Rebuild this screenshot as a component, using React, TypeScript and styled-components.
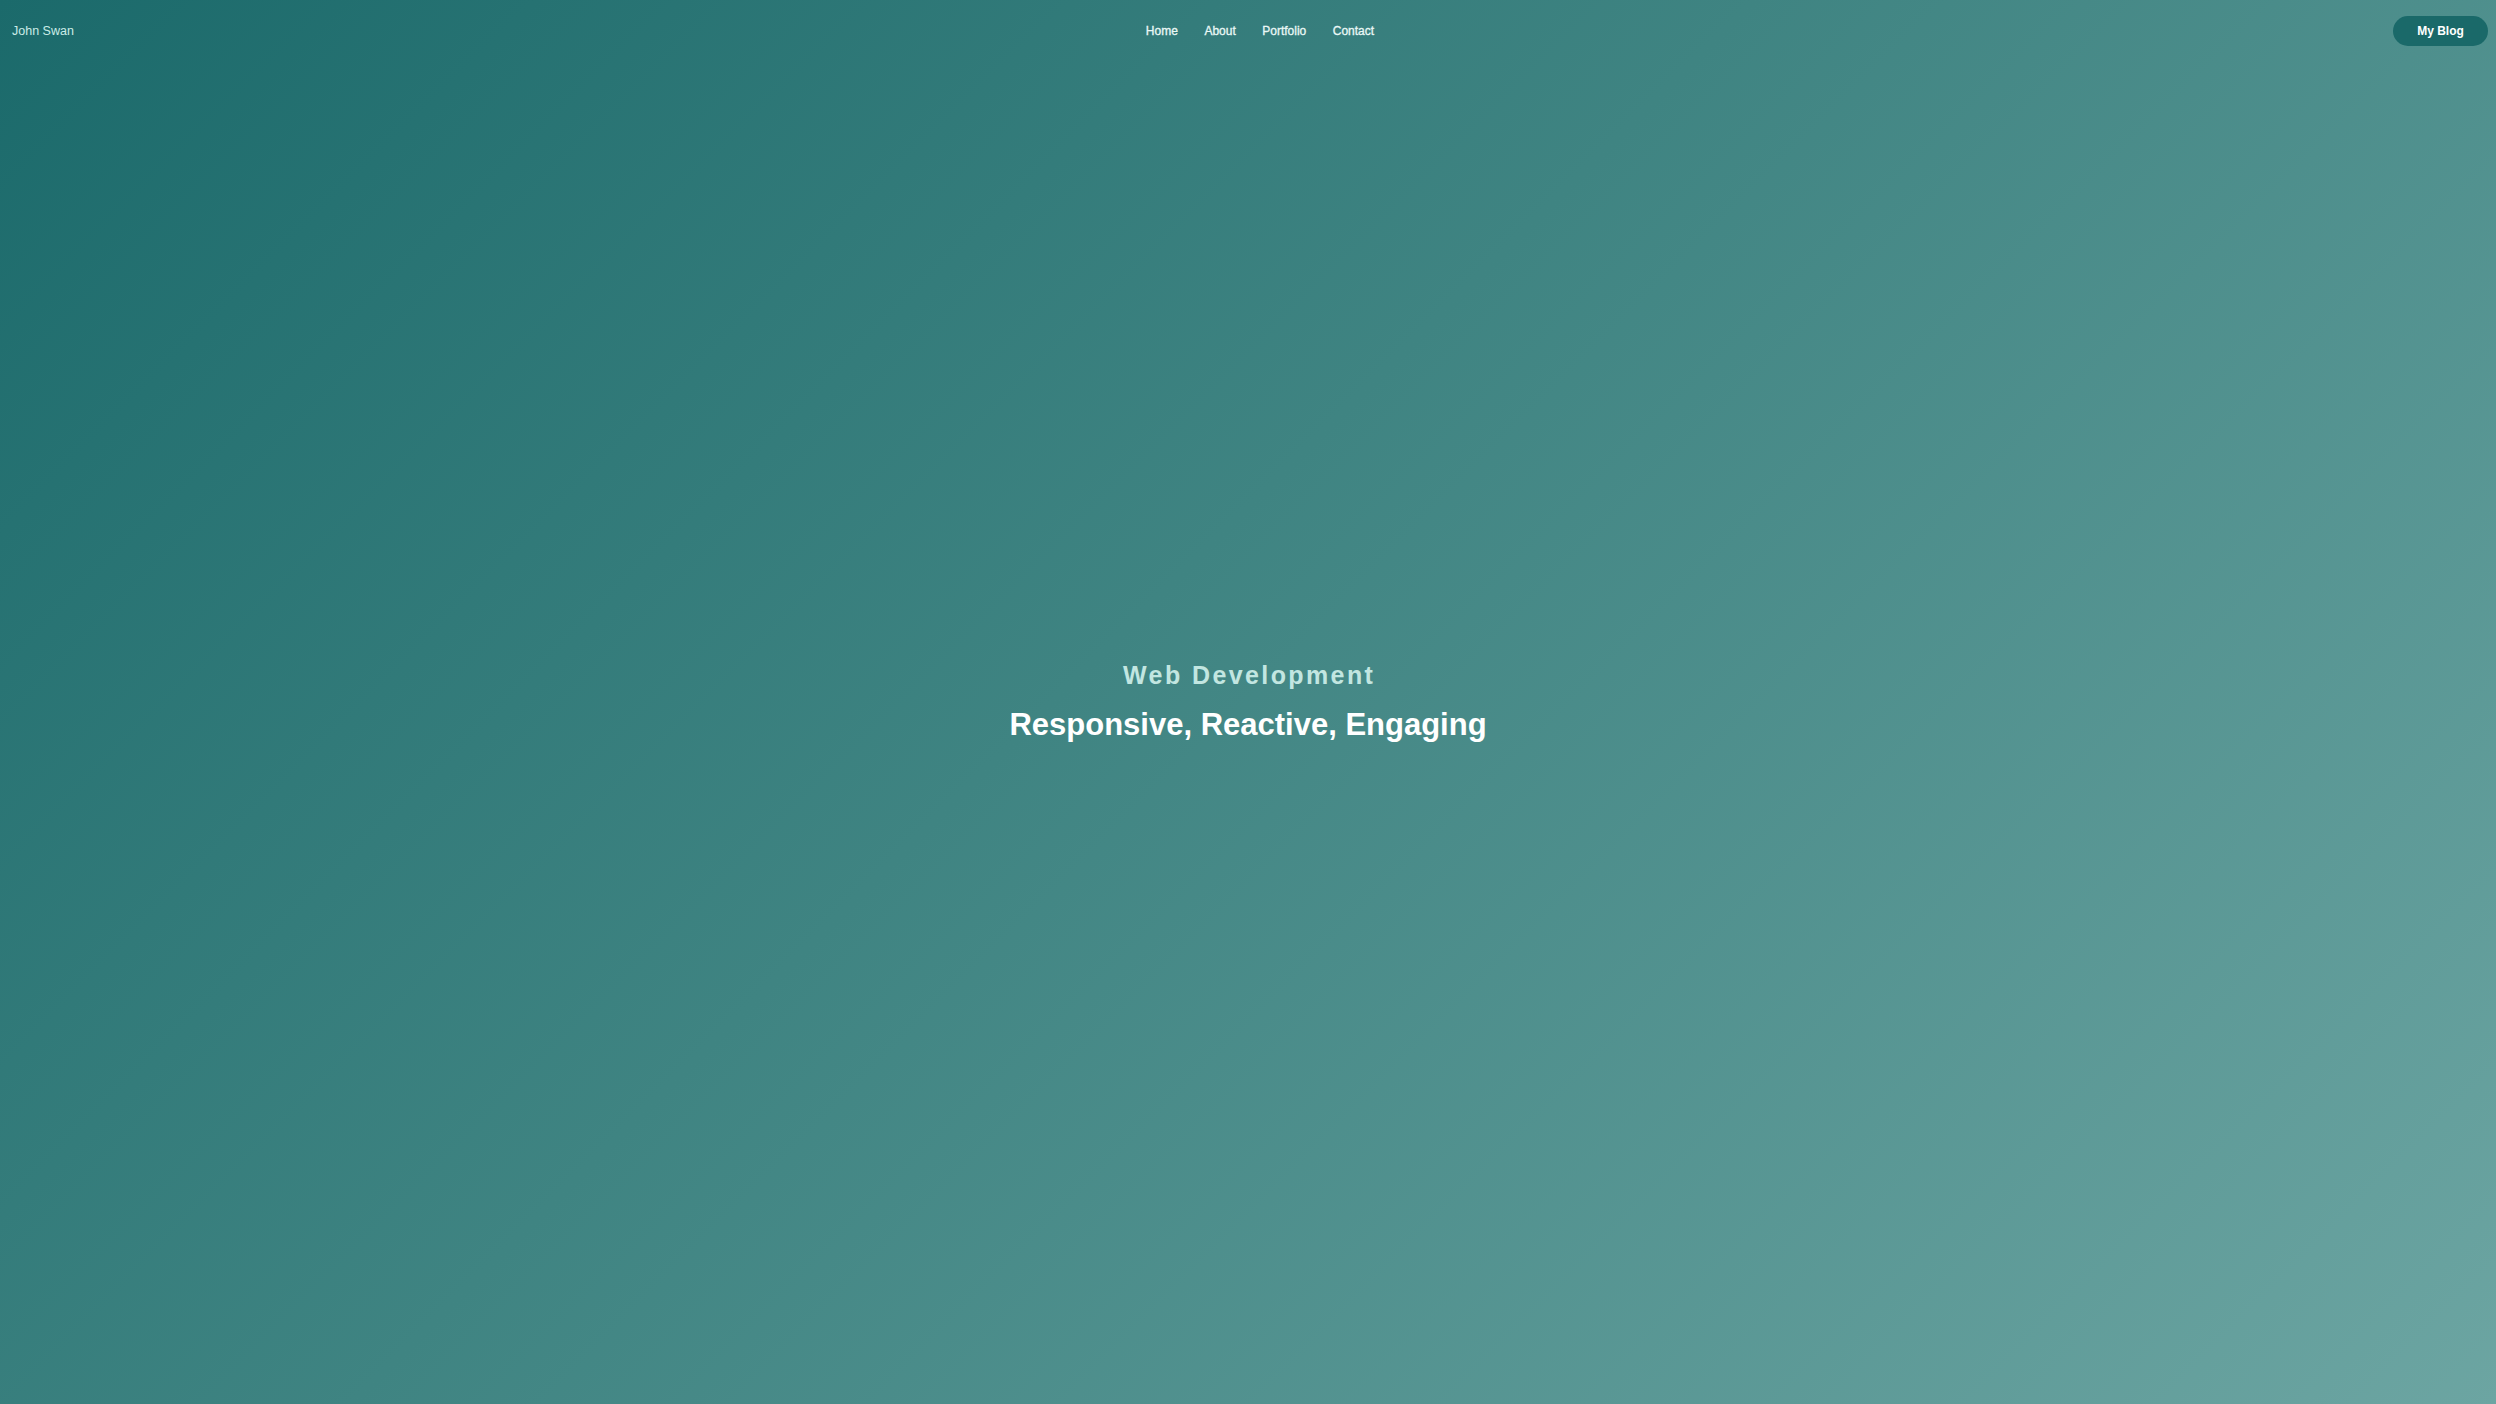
import React from "react";
import styled, { createGlobalStyle } from "styled-components";

const Global = createGlobalStyle`
  html, body { margin: 0; padding: 0; height: 100%; }
  body { font-family: "Liberation Sans", Arial, sans-serif; }
  #root { height: 100%; }
  * { box-sizing: border-box; }
`;

const Page = styled.div`
  display: grid;
  grid-template: 1fr / 1fr;
  width: 100%;
  height: 100vh;
  background: linear-gradient(135deg, #1b6a6b 0%, #3f8482 45%, #6ca5a2 100%);
  overflow: hidden;
`;

const Header = styled.header`
  grid-area: 1 / 1;
  align-self: start;
  display: grid;
  grid-template-columns: 1fr auto 1fr;
  align-items: center;
  height: 62px;
  padding: 0 8px 0 12px;
  z-index: 1;
`;

const Brand = styled.a`
  justify-self: start;
  font-size: 12.5px;
  color: #cbece7;
  text-decoration: none;
`;

const Nav = styled.nav`
  display: flex;
  gap: 26.5px;
  padding-left: 20px;
`;

const NavLink = styled.a`
  font-size: 12px;
  color: #eaf8f6;
  text-decoration: none;
  font-weight: 400;
  -webkit-text-stroke: 0.3px #eaf8f6;
`;

const BlogButton = styled.button`
  justify-self: end;
  width: 95px;
  height: 30px;
  border: none;
  border-radius: 15px;
  background: #1a6969;
  color: #ffffff;
  font-family: "Liberation Sans", Arial, sans-serif;
  font-size: 12px;
  font-weight: 700;
  cursor: pointer;
`;

const Hero = styled.main`
  grid-area: 1 / 1;
  display: flex;
  flex-direction: column;
  align-items: center;
  justify-content: center;
  gap: 17px;
  padding-top: 0;
  text-align: center;
`;

const Eyebrow = styled.h2`
  margin: 0;
  font-size: 25px;
  font-weight: 700;
  letter-spacing: 2.4px;
  color: #c2e6e1;
  padding-left: 2.4px;
`;

const Title = styled.h1`
  margin: 0;
  font-size: 31px;
  font-weight: 700;
  color: #ffffff;
`;

export default function App() {
  return (
    <>
      <Global />
      <Page>
        <Header>
          <Brand href="#">John Swan</Brand>
          <Nav>
            <NavLink href="#">Home</NavLink>
            <NavLink href="#">About</NavLink>
            <NavLink href="#">Portfolio</NavLink>
            <NavLink href="#">Contact</NavLink>
          </Nav>
          <BlogButton>My Blog</BlogButton>
        </Header>
        <Hero>
          <Eyebrow>Web Development</Eyebrow>
          <Title>Responsive, Reactive, Engaging</Title>
        </Hero>
      </Page>
    </>
  );
}
